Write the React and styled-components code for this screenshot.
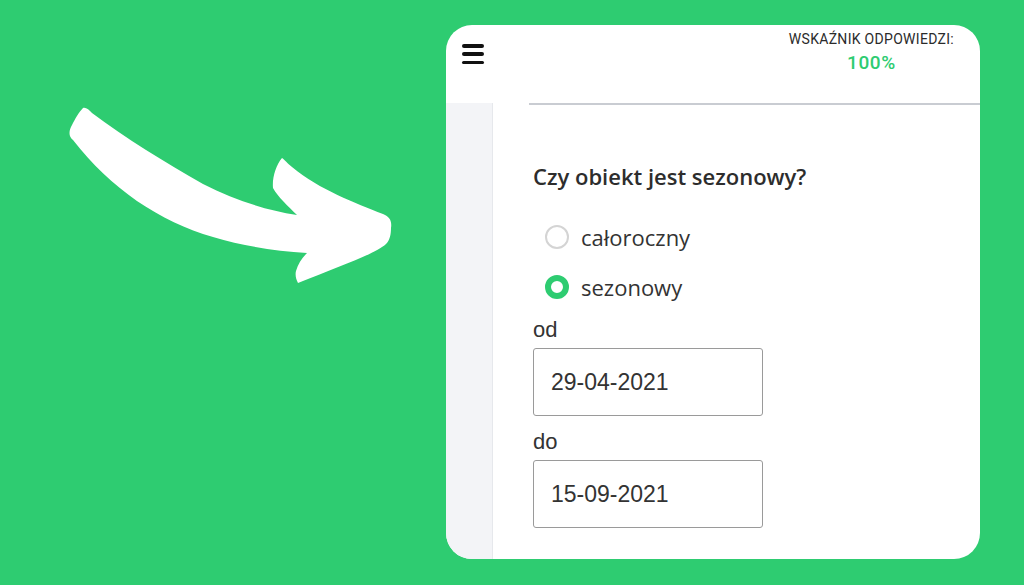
import React from "react";
import styled, { createGlobalStyle } from "styled-components";

const GlobalStyle = createGlobalStyle`
  html, body {
    margin: 0;
    padding: 0;
    background: #2ecc71;
  }
  * {
    box-sizing: border-box;
  }
`;

const Page = styled.div`
  width: 1024px;
  height: 585px;
  display: flex;
  background: #2ecc71;
  overflow: hidden;
`;

const ArrowArea = styled.div`
  width: 446px;
  height: 100%;
  flex-shrink: 0;
`;

const Stage = styled.div`
  flex: 1;
  padding: 25px 44px 26px 0;
  display: flex;
`;

const Card = styled.div`
  flex: 1;
  background: #fff;
  border-radius: 26px;
  overflow: hidden;
  display: flex;
  flex-direction: column;
`;

const Header = styled.div`
  height: 78px;
  display: flex;
  justify-content: space-between;
  align-items: flex-start;
  padding: 0 26px 0 16px;
`;

const MenuButton = styled.div`
  margin-top: 19px;
  width: 22px;
  height: 20px;
  display: flex;
  flex-direction: column;
  justify-content: space-between;
`;

const MenuBar = styled.span`
  display: block;
  height: 3.5px;
  border-radius: 2px;
  background: #111;
`;

const Indicator = styled.div`
  display: flex;
  flex-direction: column;
  align-items: center;
  padding-top: 6px;
  font-family: Roboto, "Liberation Sans", sans-serif;
`;

const IndicatorLabel = styled.div`
  font-size: 14px;
  line-height: 17px;
  color: #2b2b2b;
  letter-spacing: 0.3px;
`;

const IndicatorValue = styled.div`
  margin-top: 4px;
  font-size: 19px;
  line-height: 22px;
  font-weight: 500;
  letter-spacing: 0.6px;
  color: #2ecc71;
`;

const Body = styled.div`
  flex: 1;
  display: flex;
`;

const Sidebar = styled.div`
  width: 47px;
  flex-shrink: 0;
  background: #f3f4f7;
  border-right: 1px solid #e6e8ec;
`;

const Content = styled.div`
  flex: 1;
  display: flex;
  flex-direction: column;
`;

const Divider = styled.div`
  height: 2px;
  margin-left: 36px;
  background: #c9ccd2;
`;

const Form = styled.div`
  padding: 56px 0 0 40px;
  display: flex;
  flex-direction: column;
`;

const Question = styled.div`
  font-family: "Open Sans", "Noto Sans", sans-serif;
  font-size: 22px;
  font-weight: 600;
  line-height: 30px;
  color: #2d2d2d;
`;

const Options = styled.div`
  margin-top: 33px;
  display: flex;
  flex-direction: column;
  gap: 24px;
`;

const Option = styled.label`
  display: flex;
  align-items: center;
  gap: 12px;
  height: 26px;
  padding-left: 12px;
  font-family: "Open Sans", "Noto Sans", sans-serif;
  font-size: 22px;
  color: #333;
`;

const Radio = styled.span`
  width: 24px;
  height: 24px;
  border-radius: 50%;
  flex-shrink: 0;
  border: ${({ checked }) => (checked ? "6px solid #2ecc71" : "2px solid #d4d4d4")};
  background: #fff;
`;

const FieldLabel = styled.div`
  font-family: "Liberation Sans", Arial, sans-serif;
  font-size: 22px;
  line-height: 24px;
  color: #333;
  margin-top: ${({ first }) => (first ? "18px" : "14px")};
  margin-bottom: 6px;
`;

const DateBox = styled.div`
  width: 230px;
  height: 68px;
  border: 1.5px solid #9a9a9a;
  border-radius: 3px;
  display: flex;
  align-items: center;
  padding-left: 17px;
  font-family: "Liberation Sans", Arial, sans-serif;
  font-size: 23px;
  color: #333;
`;

function Arrow() {
  return (
    <svg width="446" height="585" viewBox="0 0 446 585">
      <path
        fill="#fff"
        d="M83 108
           C86 107 89 110 92 113
           C125 138 165 162 203 184
           C235 200 265 210 297 215
           C288 206 278 197 273 188
           C272 178 276 165 282 158
           C285 160 287 163 292 167
           C320 190 355 203 383 214
           C390 217 392 221 391 228
           C391 234 390 240 386 244
           C375 254 340 266 298 283
           C296 279 295 275 296 271
           C298 264 302 258 307 253
           C275 251 243 246 213 237
           C160 222 110 188 73 140
           C68 136 69 130 72 125
           C75 119 79 112 83 108 Z"
      />
    </svg>
  );
}

export default function App() {
  return (
    <Page>
      <GlobalStyle />
      <ArrowArea>
        <Arrow />
      </ArrowArea>
      <Stage>
        <Card>
          <Header>
            <MenuButton>
              <MenuBar />
              <MenuBar />
              <MenuBar />
            </MenuButton>
            <Indicator>
              <IndicatorLabel>WSKAŹNIK ODPOWIEDZI:</IndicatorLabel>
              <IndicatorValue>100%</IndicatorValue>
            </Indicator>
          </Header>
          <Body>
            <Sidebar />
            <Content>
              <Divider />
              <Form>
                <Question>Czy obiekt jest sezonowy?</Question>
                <Options>
                  <Option>
                    <Radio />
                    całoroczny
                  </Option>
                  <Option>
                    <Radio checked />
                    sezonowy
                  </Option>
                </Options>
                <FieldLabel first>od</FieldLabel>
                <DateBox>29-04-2021</DateBox>
                <FieldLabel>do</FieldLabel>
                <DateBox>15-09-2021</DateBox>
              </Form>
            </Content>
          </Body>
        </Card>
      </Stage>
    </Page>
  );
}
